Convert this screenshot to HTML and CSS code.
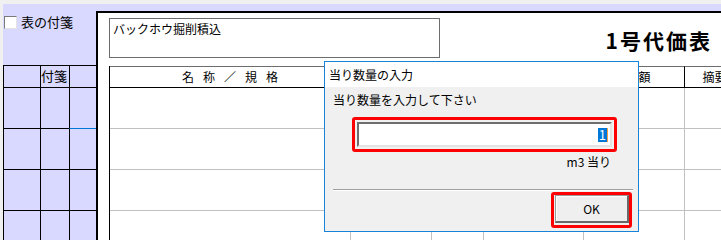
FILE: index.html
```html
<!DOCTYPE html>
<html lang="ja">
<head>
    <meta charset="UTF-8">
    <title>1号代価表 - 当り数量の入力</title>
    <link rel="stylesheet" href="styles.css">
</head>
<body>
    <div class="screen">
        <aside class="tag-panel">
            <label class="tag-check"><span class="check-box"></span>表の付箋</label>
            <div class="tag-grid">
                <div class="tg-cell head"></div>
                <div class="tg-cell head">付箋</div>
                <div class="tg-cell head"></div>

                <div class="tg-cell"></div><div class="tg-cell"></div><div class="tg-cell"></div>
                <div class="tg-cell"></div><div class="tg-cell"></div><div class="tg-cell focus"></div>
                <div class="tg-cell"></div><div class="tg-cell"></div><div class="tg-cell"></div>
                <div class="tg-cell"></div><div class="tg-cell"></div><div class="tg-cell"></div>
            </div>
        </aside>

        <main class="sheet-wrap">
            <div class="sheet">
                <div class="sheet-head">
                    <div class="name-box">バックホウ掘削積込</div>
                    <h1 class="sheet-title">1号代価表</h1>
                </div>

                <div class="price-table">
                    <div class="pt-head spaced">名称／規格</div>
                    <div class="pt-head"></div>
                    <div class="pt-head"></div>
                    <div class="pt-head"></div>
                    <div class="pt-head spaced">金額</div>
                    <div class="pt-head">摘要</div>

                    <div class="pt-cell"></div><div class="pt-cell"></div><div class="pt-cell"></div><div class="pt-cell"></div><div class="pt-cell"></div><div class="pt-cell"></div>
                    <div class="pt-cell"></div><div class="pt-cell"></div><div class="pt-cell"></div><div class="pt-cell"></div><div class="pt-cell"></div><div class="pt-cell"></div>
                    <div class="pt-cell"></div><div class="pt-cell"></div><div class="pt-cell"></div><div class="pt-cell"></div><div class="pt-cell"></div><div class="pt-cell"></div>
                    <div class="pt-cell"></div><div class="pt-cell"></div><div class="pt-cell"></div><div class="pt-cell"></div><div class="pt-cell"></div><div class="pt-cell"></div>
                </div>
            </div>
        </main>

        <!-- 当り数量ダイアログ -->
        <div class="dialog">
            <div class="dialog-title">当り数量の入力</div>
            <div class="dialog-body">
                <div class="dialog-label">当り数量を入力して下さい</div>
                <div class="mark input-mark">
                    <div class="qty-input"><span class="sel">1</span></div>
                </div>
                <div class="unit">m3 当り</div>
                <div class="separator"></div>
                <div class="mark ok-mark">
                    <button class="ok-button">OK</button>
                </div>
            </div>
        </div>
    </div>
</body>
</html>
```

FILE: styles.css
```css
html, body {
    margin: 0;
    padding: 0;
    background: #f0f0f0;
    overflow: hidden;
}
body {
    font-family: "Noto Sans CJK JP", "Noto Sans", sans-serif;
    font-size: 12px;
    color: #000;
    width: 721px;
    height: 240px;
}
.screen {
    position: relative;
    display: flex;
    margin: 4px 0 0 3px;
    height: 236px;
    background: #d9d9ff;
}

/* left tag panel */
.tag-panel {
    width: 93px;
    flex-shrink: 0;
}
.tag-check {
    display: flex;
    align-items: center;
    height: 61px;
    box-sizing: border-box;
    padding: 0 0 26px 1px;
    font-size: 13px;
    line-height: 15px;
}
.check-box {
    width: 11px;
    height: 11px;
    margin: 2px 4px 0 0;
    background: #fff;
    border: 1px solid #7a7a7a;
    border-right-color: #e3e3e3;
    border-bottom-color: #e3e3e3;
}
.tag-grid {
    display: grid;
    grid-template-columns: 37px 29px 27px;
    grid-template-rows: 22px;
    grid-auto-rows: 41px;
}
.tg-cell {
    box-sizing: border-box;
    border-left: 1px solid #000;
    border-top: 1px solid #000;
}
.tg-cell.head {
    font-size: 13px;
    line-height: 20px;
}
.tg-cell.focus {
    border-top-color: #0078d7;
}

/* sheet */
.sheet-wrap {
    flex: 1;
    padding-top: 7px;
    min-width: 0;
}
.sheet {
    height: 100%;
    background: #fff;
    border-left: 2px solid #000;
    border-top: 2px solid #000;
    overflow: hidden;
}
.sheet-head {
    display: flex;
    padding: 5px 0 0 11px;
}
.name-box {
    width: 331px;
    height: 40px;
    box-sizing: border-box;
    border: 1px solid #6d6d6d;
    padding: 2px 3px;
    line-height: 16px;
}
.sheet-title {
    margin: 10px 9px 0 auto;
    font-size: 21px;
    line-height: 24px;
    font-weight: bold;
    letter-spacing: 2px;
}
.price-table {
    display: grid;
    grid-template-columns: 241px 81px 52px 100px 101px 60px;
    grid-template-rows: 22px;
    grid-auto-rows: 41px;
    margin: 8px 0 0 11px;
    border-left: 1px solid #000;
    width: max-content;
}
.pt-head {
    box-sizing: border-box;
    border-top: 1px solid #6d6d6d;
    border-bottom: 1px solid #000;
    border-right: 1px solid #000;
    line-height: 20px;
    text-align: center;
    white-space: nowrap;
}
.pt-head.spaced {
    letter-spacing: 9px;
    padding-left: 9px;
}
.pt-cell {
    box-sizing: border-box;
    border-right: 1px solid #c0c0c0;
    border-bottom: 1px solid #c0c0c0;
}

/* dialog */
.dialog {
    position: absolute;
    left: 321px;
    top: 57px;
    width: 315px;
    height: 171px;
    box-sizing: border-box;
    border: 1px solid #1883d7;
    display: flex;
    flex-direction: column;
}
.dialog-title {
    height: 25px;
    background: #fff;
    display: flex;
    align-items: center;
    padding-left: 4px;
    font-size: 12px;
}
.dialog-body {
    flex: 1;
    background: #f0f0f0;
    display: flex;
    flex-direction: column;
    padding-top: 6px;
}
.dialog-label {
    margin-left: 8px;
    line-height: 14px;
}
.mark {
    border: 3px solid #f00;
    border-radius: 3px;
    box-sizing: border-box;
}
.input-mark {
    margin: 10px 0 0 27px;
    width: 265px;
    padding: 2px;
}
.qty-input {
    height: 25px;
    box-sizing: border-box;
    background: #fff;
    border: 2px solid #6e6e6e;
    border-right-color: #e3e3e3;
    border-bottom-color: #e3e3e3;
    display: flex;
    align-items: center;
    justify-content: flex-end;
    padding-right: 2px;
}
.sel {
    background: #0078d7;
    color: #fff;
    font-size: 13px;
    line-height: 14px;
    padding: 0 1px;
    border-right: 1px solid #f59b42;
}
.unit {
    margin: 3px 0 0 27px;
    width: 259px;
    text-align: right;
    line-height: 14px;
}
.separator {
    margin: 20px 0 0 8px;
    width: 300px;
    border-top: 1px solid #a0a0a0;
    border-bottom: 1px solid #fff;
}
.ok-mark {
    align-self: flex-end;
    margin: 1px 6px 0 0;
    width: 81px;
    height: 36px;
    padding: 0 0 2px 1px;
    display: flex;
}
.ok-button {
    flex: 1;
    font-family: inherit;
    font-size: 12px;
    background: #efefef;
    border: 1px solid #9a9a9a;
    border-right: 2px solid #696969;
    border-bottom: 2px solid #696969;
    box-shadow: inset 1px 1px #fff;
    padding: 0;
    color: #000;
}
```
